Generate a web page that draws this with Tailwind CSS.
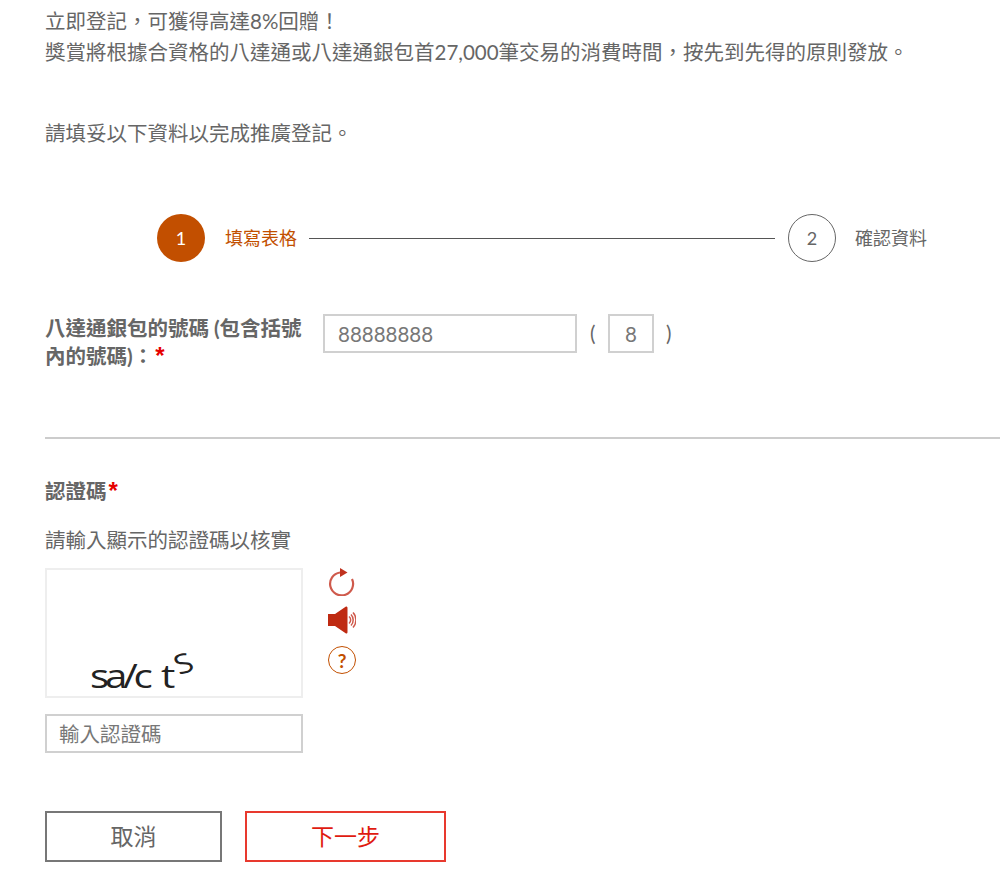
<!DOCTYPE html>
<html lang="zh-Hant">
<head>
    <meta charset="UTF-8">
    <title>推廣登記</title>
    <script src="https://cdn.jsdelivr.net/npm/@tailwindcss/browser@4"></script>
</head>
<body class="bg-white overflow-hidden">
    <div class="pl-[45px] h-[881px] overflow-hidden text-[20.5px] text-[#666] font-['Lato','Noto_Sans_CJK_TC',sans-serif]">
        <!-- intro -->
        <p class="leading-[31px] pt-[6px]">立即登記，可獲得高達8%回贈！<br>獎賞將根據合資格的八達通或八達通銀包首27,000筆交易的消費時間，按先到先得的原則發放。</p>
        <p class="leading-[31px] mt-[50px]">請填妥以下資料以完成推廣登記。</p>

        <!-- steps -->
        <div class="flex items-center mt-[65px] ml-[112px] w-[790px] h-[48px]">
            <div class="w-[48px] h-[48px] shrink-0 rounded-full bg-[#c24f00] text-white text-[18px] flex items-center justify-center">1</div>
            <span class="ml-[20px] text-[18px] text-[#c24f00] whitespace-nowrap">填寫表格</span>
            <div class="ml-[12px] w-[466px] h-px bg-[#555] shrink-0"></div>
            <div class="ml-[13px] w-[48px] h-[48px] shrink-0 rounded-full border border-[#666] text-[18px] flex items-center justify-center">2</div>
            <span class="ml-[19px] text-[18px] whitespace-nowrap">確認資料</span>
        </div>

        <!-- octopus number -->
        <div class="flex items-start mt-[52px]">
            <label class="w-[278px] font-bold leading-[28px] shrink-0">八達通銀包的號碼 (包含括號<br>內的號碼)：<span class="text-[#e60000] ml-[2px] text-[24px] leading-none font-['Liberation_Sans',sans-serif]">*</span></label>
            <input class="w-[254px] h-[39px] border-2 border-[#d0d0d0] px-[13px] text-[20.5px] text-[#777] bg-white" value="88888888" type="text">
            <span class="ml-[13px] w-[18px] leading-[39px]">(</span>
            <input class="w-[46px] h-[39px] border-2 border-[#d0d0d0] text-center text-[20.5px] text-[#777] bg-white" value="8" type="text">
            <span class="ml-[12px] leading-[39px]">)</span>
        </div>

        <div class="mt-[67px] h-[2px] bg-[#ccc]"></div>

        <!-- captcha -->
        <p class="font-bold leading-[28px] mt-[38px]">認證碼<span class="text-[#e60000] ml-[2px] text-[24px] leading-none font-['Liberation_Sans',sans-serif]">*</span></p>
        <p class="leading-[28px] mt-[21px]">請輸入顯示的認證碼以核實</p>
        <div class="flex items-start mt-[14px]">
            <div class="w-[258px] h-[130px] border-2 border-[#eee] flex items-end pl-[43px]">
                <div class="flex items-end text-[#222] font-['Open_Sans',sans-serif] font-medium leading-[40px] scale-x-[1.22] origin-left">
                    <span class="text-[33px] tracking-[-3.500px] whitespace-pre">sa/c  t</span><span class="text-[27px] ml-[3px] -rotate-[20deg] -translate-y-[13px]">S</span>
                </div>
            </div>
            <div class="ml-[24px] flex flex-col items-center w-[30px]">
                <svg class="w-[28px] h-[28px]" viewBox="0 0 28 28" fill="none">
                    <path d="M12 4.500A11.500 11.500 0 1 0 24 11" stroke="#cf5a4c" stroke-width="2.200"/>
                    <path d="M12 0l7.500 4.500L12 9z" fill="#c0321f"/>
                </svg>
                <svg class="w-[28px] h-[28px] mt-[10px]" viewBox="0 0 28 28" fill="none">
                    <path d="M0 8h7L18 .5c1 0 1.500.5 1.500 1.500v24c0 1-.5 1.500-1.500 1.500L7 20H0z" fill="#bf2a12"/>
                    <path d="M21 10.500a4.500 4.500 0 0 1 0 7M23 8.500a8 8 0 0 1 0 11M25 6.500a11 11 0 0 1 0 15" stroke="#cf5a4c" stroke-width="1.500"/>
                </svg>
                <div class="w-[28px] h-[28px] mt-[12px] rounded-full border-[1.5px] border-[#c24f00] text-[#c24f00] text-[19px] font-bold leading-none flex items-center justify-center">?</div>
            </div>
        </div>
        <input class="block mt-[16px] w-[258px] h-[39px] border-2 border-[#d0d0d0] px-[12px] text-[20.5px] placeholder:text-[#777] bg-white" placeholder="輸入認證碼" type="text">

        <!-- buttons -->
        <div class="flex mt-[58px]">
            <button class="w-[177px] h-[51px] border-2 border-[#777] text-[23px] text-[#666] bg-white" type="button">取消</button>
            <button class="ml-[23px] w-[201px] h-[51px] border-2 border-[#e8392e] text-[23px] text-[#e01b10] bg-white" type="button">下一步</button>
        </div>
    </div>
</body>
</html>
